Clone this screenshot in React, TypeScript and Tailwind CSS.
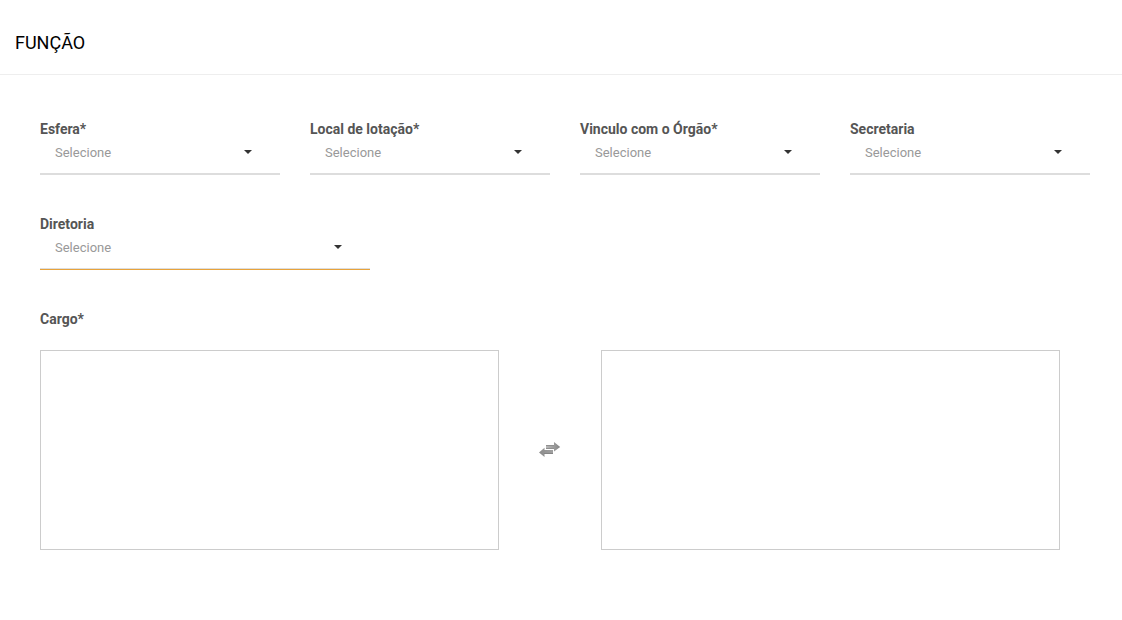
import { useId } from "react";

type FieldProps = { label: string; active?: boolean };

function SelectField({ label, active = false }: FieldProps) {
  const id = useId();
  return (
    <div className="min-w-0">
      <label htmlFor={id} className="block text-sm leading-5 font-bold text-[#555]">
        {label}
      </label>
      <div className="grid items-center">
        <select
          id={id}
          defaultValue=""
          className={`col-start-1 row-start-1 h-9 w-full appearance-none rounded-none border-b bg-transparent px-[15px] pb-[7px] text-[13px] text-[#999] shadow-[inset_0_-1px_0_#ddd] outline-none ${
            active ? "border-[#e8a33a]" : "border-[#ddd]"
          }`}
        >
          <option value="">Selecione</option>
        </select>
        <svg
          aria-hidden="true"
          viewBox="0 0 8 4"
          className="pointer-events-none col-start-1 row-start-1 mr-7 mb-[10px] h-1 w-2 justify-self-end fill-[#333]"
        >
          <path d="M0 0h8L4 4z" />
        </svg>
      </div>
    </div>
  );
}

function SwapIcon() {
  return (
    <svg aria-hidden="true" viewBox="0 0 22 16" className="h-4 w-[22px]">
      <defs>
        <linearGradient id="swap-right" x1="0" y1="0" x2="1" y2="0">
          <stop offset="0" stopColor="#b8b8b8" />
          <stop offset="1" stopColor="#858585" />
        </linearGradient>
        <linearGradient id="swap-left" x1="0" y1="0" x2="1" y2="0">
          <stop offset="0" stopColor="#8c8c8c" />
          <stop offset="1" stopColor="#a0a0a0" />
        </linearGradient>
      </defs>
      <path d="M7 3h8V0l6.200 5L15 9.500V7H7z" fill="url(#swap-right)" />
      <path d="M7 3h8v1H7zM7 6h8v1H7z" fill="#909090" />
      <path d="M14 8H5.500V5.800L0 10.500l5.500 4.500V12H14z" fill="url(#swap-left)" />
      <path d="M5 11h9v1H5z" fill="#858585" />
    </svg>
  );
}

export default function App() {
  return (
    <main className="min-h-screen bg-white font-['Roboto',sans-serif] text-black">
      <header className="border-b border-[#eee] px-[15px] pt-[31px] pb-[19px]">
        <h1 className="text-lg leading-6">FUNÇÃO</h1>
      </header>
      <form className="px-10 pt-11 pr-8">
        <div className="grid grid-cols-4 gap-[30px]">
          <SelectField label="Esfera*" />
          <SelectField label="Local de lotação*" />
          <SelectField label="Vinculo com o Órgão*" />
          <SelectField label="Secretaria" />
        </div>
        <div className="mt-[39px] grid grid-cols-3 gap-[30px]">
          <SelectField label="Diretoria" active />
        </div>
        <fieldset className="mt-[39px]">
          <legend className="text-sm leading-5 font-bold text-[#555]">Cargo*</legend>
          <div className="mt-[21px] mr-[30px] flex items-center">
            <select multiple aria-label="Cargos disponíveis" className="h-[200px] min-w-0 flex-1 border border-[#ccc] bg-white" />
            <button type="button" aria-label="Transferir" className="flex w-[102px] justify-center">
              <SwapIcon />
            </button>
            <select multiple aria-label="Cargos selecionados" className="h-[200px] min-w-0 flex-1 border border-[#ccc] bg-white" />
          </div>
        </fieldset>
      </form>
    </main>
  );
}
